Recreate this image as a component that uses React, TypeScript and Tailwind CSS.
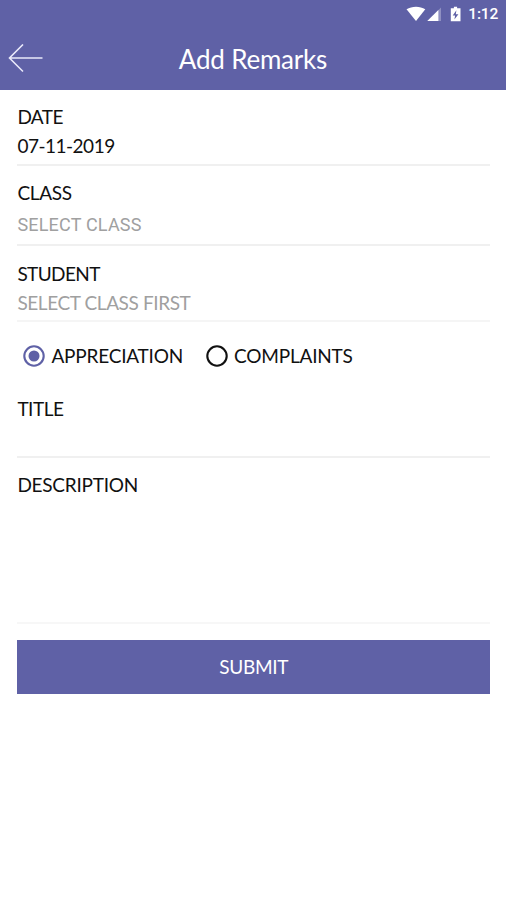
import { useState } from "react";

type RemarkType = "APPRECIATION" | "COMPLAINTS";

function StatusBar() {
  return (
    <div className="flex h-7 items-center justify-end gap-px pr-2 text-white">
      <svg width="62" height="20" viewBox="0 0 62 20" fill="none">
        {/* wifi */}
        <path d="M1.5 5.2C7 1.8 15 1.8 20.3 5.2L11 17Z" fill="#fff" />
        {/* signal */}
        <path d="M36 3.5V17H22.3Z" fill="#fff" fillOpacity="0.3" />
        <path d="M33.4 6V17H22.3Z" fill="#fff" />
        {/* battery */}
        <path d="M48.9 2.8H52.1V4.3H55.5V17.3H45.8V4.3H48.9Z" fill="#fff" />
        <path d="M51.4 6.2L47.7 11.5H50.1L49.4 15.4L53.4 10.2H50.8Z" fill="#5f61a6" />
      </svg>
      <span className="font-['Roboto',sans-serif] text-[15.5px] leading-5 font-medium tracking-[-0.2px]">
        1:12
      </span>
    </div>
  );
}

function Radio({
  label,
  checked,
  onSelect,
}: {
  label: RemarkType;
  checked: boolean;
  onSelect: () => void;
}) {
  return (
    <button
      type="button"
      role="radio"
      aria-checked={checked}
      onClick={onSelect}
      className="flex items-center gap-[6px] tracking-[-0.2px]"
    >
      <svg width="22" height="22" viewBox="0 0 22 22" fill="none">
        <circle cx="11" cy="11" r="9.7" stroke={checked ? "#5f61a6" : "#111"} strokeWidth="2.1" />
        {checked && <circle cx="11" cy="11" r="5.5" fill="#5f61a6" />}
      </svg>
      <span>{label}</span>
    </button>
  );
}

export default function App() {
  const [type, setType] = useState<RemarkType>("APPRECIATION");

  return (
    <div className="min-h-[900px] w-full bg-white font-['Lato',sans-serif] text-[19px] leading-6 text-[#111]">
      {/* Header */}
      <header className="h-[90px] bg-[#5f61a6] text-white">
        <StatusBar />
        <div className="grid h-[62px] grid-cols-[60px_1fr_60px] items-center">
          <button type="button" aria-label="Back" className="pl-2">
            <svg width="36" height="30" viewBox="0 0 36 30" fill="none" stroke="#e9e9fa" strokeWidth="1.6">
              <path d="M34.5 14H1.5M15 0.5L1.5 14L15 27.5" />
            </svg>
          </button>
          <h1 className="text-center text-[26px] leading-8 tracking-[-0.2px]">Add Remarks</h1>
        </div>
      </header>

      <main className="pr-4 pl-[17.4px]">
        {/* Date */}
        <div className="h-[76px] border-b-2 border-[#f0f0f0] pt-[15px]">
          <div className="tracking-[-0.6px]">DATE</div>
          <div className="mt-[5px] tracking-[-0.5px]">07-11-2019</div>
        </div>

        {/* Class */}
        <div className="h-[80px] border-b-2 border-[#f0f0f0] pt-[15px]">
          <div className="tracking-[-0.3px]">CLASS</div>
          <div className="mt-2 font-['Roboto',sans-serif] text-[18px] tracking-[0.2px] text-[#a0a0a0]">
            SELECT CLASS
          </div>
        </div>

        {/* Student */}
        <div className="h-[76px] border-b-2 border-[#f5f5f5] pt-4">
          <div className="tracking-[-0.6px]">STUDENT</div>
          <div className="mt-[5px] tracking-[-0.4px] text-[#a0a0a0]">SELECT CLASS FIRST</div>
        </div>

        {/* Remark type */}
        <div role="radiogroup" className="flex h-[68px] items-center gap-[23px] pl-[6px]">
          <Radio
            label="APPRECIATION"
            checked={type === "APPRECIATION"}
            onSelect={() => setType("APPRECIATION")}
          />
          <Radio
            label="COMPLAINTS"
            checked={type === "COMPLAINTS"}
            onSelect={() => setType("COMPLAINTS")}
          />
        </div>

        {/* Title */}
        <div className="h-[68px] border-b-2 border-[#f0f0f0] pt-[7px] tracking-[-0.5px]">TITLE</div>

        {/* Description */}
        <div className="h-[166px] border-b-2 border-[#f7f7f7] pt-[15px] tracking-[-0.25px]">
          DESCRIPTION
        </div>

        <button
          type="button"
          className="mt-4 block h-[54px] w-full bg-[#5f61a6] text-center tracking-[-0.3px] text-white"
        >
          SUBMIT
        </button>
      </main>
    </div>
  );
}
